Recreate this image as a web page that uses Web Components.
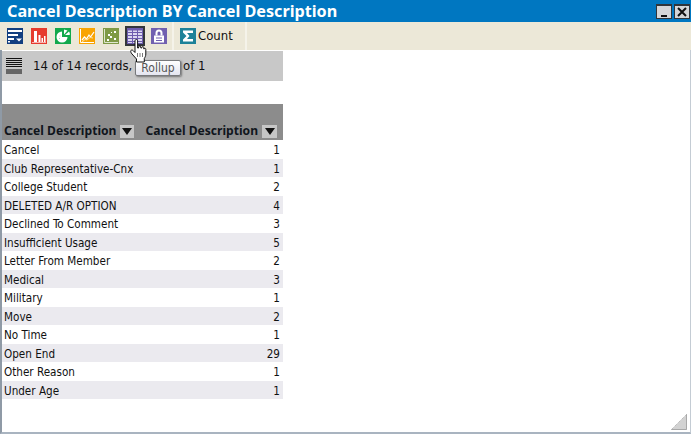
<!DOCTYPE html>
<html><head><meta charset="utf-8"><style>
html,body{margin:0;padding:0;background:#fff}
body{width:691px;height:434px;overflow:hidden;font-family:"DejaVu Sans Condensed","Noto Sans",sans-serif}
</style></head><body>
<report-window>
<tool-bar></tool-bar>
<status-bar></status-bar>
<data-table></data-table>
</report-window>
<script>
const F='"DejaVu Sans Condensed","Noto Sans",sans-serif', B='"Noto Sans",sans-serif';
const def=(n,html,init)=>customElements.define(n,class extends HTMLElement{constructor(){super();this.attachShadow({mode:'open'}).innerHTML=html}connectedCallback(){init&&init(this.shadowRoot,this)}});
def('report-window',`<style>
:host{display:flex;flex-direction:column;width:691px;height:434px;box-sizing:border-box;position:relative;background:#fff;border-left:2px solid #8f9aa6;border-bottom:2px solid #a9b4c0;border-right:1px solid #c4ccd4}
.title{margin-left:-2px;margin-right:-1px;height:22px;background:#0077c1;display:flex;align-items:center;justify-content:space-between;padding:0 1px 0 7px;flex:none}
h1{margin:0;font:bold 16.2px/22px ${B};color:#fff;white-space:nowrap}
.btns{display:flex;gap:2px;margin-top:1px}
.b{width:16px;height:15px;box-sizing:border-box;border:1px solid #30353a;border-top:2px solid #30353a;background:#d4d6d8;display:block}
.grip{position:absolute;right:3px;bottom:2px}
</style><div class="title"><h1>Cancel Description BY Cancel Description</h1><div class="btns">
<svg class="b" viewBox="0 0 14 12"><rect x="4" y="9" width="6" height="2" fill="#111"/></svg>
<svg class="b" viewBox="0 0 14 12"><path d="M3 2L11 10M11 2L3 10" stroke="#111" stroke-width="2"/></svg>
</div></div><slot></slot>
<svg class="grip" width="16" height="16" viewBox="0 0 16 16"><path d="M16 0V16H0Z" fill="#d2d2d2"/><path d="M15.5 0.5V15.5H0.5" fill="none" stroke="#a8a8a8"/><path d="M16 0L0 16" stroke="#aaa" stroke-dasharray="1 1"/></svg>`);

const ic=(bg,inner,cls='')=>`<svg class="${cls}" width="16" height="16" viewBox="0 0 16 16" style="background:${bg};display:block">${inner}</svg>`;
def('tool-bar',`<style>
:host{display:flex;align-items:center;height:28px;background:#ece8d8;margin-left:-2px;margin-right:-1px;flex:none;box-sizing:border-box;padding:0 0 0 7px;position:relative}
.g{display:flex;align-items:center;gap:8px}
.sel{outline:2px solid #33363a}
.sep{width:2px;height:28px;background:#f5f3ea;margin:0 6px 0 5px}
.lbl{font:13px/16px ${F};color:#111;margin-left:2px;width:35px}
.c{display:flex;align-items:center}
.hand{position:absolute;left:130px;top:17px;z-index:3}
</style><div class="g" id="g"></div><div class="sep"></div><div class="c" id="c"></div><div class="sep" style="margin-left:12px"></div>
<svg class="hand" width="18" height="24" viewBox="0 0 18 24"><path d="M5 2c0-2 2.600-2 2.600 0V9h1V8c0-1.400 2.200-1.400 2.200 0v1h1V8.600c0-1.300 2-1.300 2 0V10h.4c0-1 1.600-1 1.600.3V15c0 2-.7 3-1.500 4.500V23H6.500v-3L2 15C0 12.500.6 11 2 11c1 0 2 1.500 3 2.500Z" fill="#fff" stroke="#111" stroke-width="1"/><path d="M7.500 14v4M10 14v4M12.500 14v4" stroke="#555" stroke-width=".8"/></svg>`,
(r)=>{
r.getElementById('g').innerHTML=[
ic('#123f80','<path d="M1 2h14v2H1zM1 6h10v2H1zM1 10h6v2H1zM1 13h2v1.500H1z" fill="#fff"/><path d="M9 10.500h6l-3 3z" fill="#fff"/>'),
ic('#e63c2e','<path d="M3 3h3v11H3zM7.500 7h2v7h-2zM10.500 10h1.500v4h-1.500zM13 8h1.500v6H13z" fill="#fff"/><rect x="1" y="14" width="14" height="1" fill="#f7b5ae"/>'),
ic('#12a94c','<path d="M7 3.500A5.500 5.500 0 1 0 12.500 9H7Z" fill="#fff"/><path d="M9 1.500l3.500 1L9 6.500Z" fill="#fff"/><path d="M10 7l4-3.500c.9 1.200 1 2.500 .6 3.500Z" fill="#fff"/><path d="M4.500 8h1M4 10.500h1" stroke="#a6dcb8"/>'),
ic('#f9a400','<path d="M1.500 1v13.500H15" fill="none" stroke="#fff"/><path d="M3 12l2.500-3 2 2 2.500-4 1.500 2L15 4" fill="none" stroke="#fff" stroke-width="1.200"/><path d="M3 14l3-2.500 2 .5 3-2.500 3 .5" fill="none" stroke="#fde0a0"/>'),
ic('#7f9a45','<path d="M1.500 1v13.500H15" fill="none" stroke="#dfe7cf"/><path d="M4 11h2v2H4zM7 8h2v2H7zM11 3h2v2h-2zM11 10h2v2h-2zM5 6h2v2H5zM8 4h1v1H8z" fill="#fff"/>'),
ic('#6d5cae','<path d="M1 1h14v14H1z" fill="#dcd8f0"/><path d="M1 4.500h14M1 7.500h14M1 10.500h14M1 13.500h14M5.500 1v14M10.500 1v14" stroke="#6d5cae"/><path d="M1 1h14v1.500H1z" fill="#6d5cae"/>','sel'),
ic('#7160b0','<path d="M4.500 7.500V5a3.500 3.500 0 0 1 7 0v2.500h-2V5a1.500 1.500 0 0 0-3 0v2.500z" fill="#fff"/><rect x="3" y="7.500" width="10" height="7" fill="#fff"/><path d="M5 10h6M5 12.500h6" stroke="#7160b0"/>')
].join('');
r.getElementById('c').innerHTML=ic('#1d8299','<path d="M3 2.500h10v2.500H7L9.500 8 7 11h6v2.500H3v-2l3.500-3.500L3 4.500z" fill="#fff"/>')+'<span class="lbl">Count</span>';
});

def('status-bar',`<style>
:host{display:flex;align-items:center;width:281px;height:30px;background:#c8c8c8;flex:none;box-sizing:border-box;padding-left:4px;position:relative;font:13px/16px ${F};color:#111;margin-top:1px}
.t{margin-left:11px;white-space:nowrap;width:150px}
.tip{position:absolute;left:133px;top:9px;width:46px;height:16px;box-sizing:border-box;border:1px solid #77797c;border-radius:2px;background:linear-gradient(#fff,#e4e5f0);font:12px/14px ${F};color:#555;text-align:center;box-shadow:1px 1px 2px #777;z-index:2}
</style><svg width="16" height="16" viewBox="0 0 16 16"><path d="M0 .5h16M0 2.500h16M0 4.500h16M0 6.500h16M0 8.500h16" stroke="#111"/><rect y="11" width="16" height="5" fill="#666"/></svg>
<span class="t">14 of 14 records,</span><span>of 1</span><div class="tip">Rollup</div>`);

def('data-table',`<style>
:host{display:block;width:281px;margin-top:23px;font:11.600px/18px ${F};color:#111}
.h{height:36px;background:#8c8c8c;display:grid;grid-template-columns:134px 1fr;align-items:end;font:700 12.100px/18px ${B};color:#10151c;box-sizing:border-box;padding:0 0 0 2px}
.h div{display:flex;align-items:center;justify-content:flex-end;gap:4px;white-space:nowrap}
.h div:first-child{justify-content:flex-start}
.h i{width:15px;height:13px;background:#c6c6c6;display:flex;align-items:center;justify-content:center;margin-right:4px}
.h i::after{content:"";border:5px solid transparent;border-top:7px solid #111;border-bottom:0}
.r{display:flex;justify-content:space-between;padding:1px 3px 0 2px;height:19px;line-height:18px;box-sizing:border-box}
.r:nth-child(even){background:#ebeaef;height:18px;line-height:18px}
</style><div class="h"><div>Cancel Description <i></i></div><div>Cancel Description <i style="margin-right:6px"></i></div></div><div id="b"></div>`,
(r)=>{r.getElementById('b').innerHTML=[['Cancel',1],['Club Representative-Cnx',1],['College Student',2],['DELETED A/R OPTION',4],['Declined To Comment',3],['Insufficient Usage',5],['Letter From Member',2],['Medical',3],['Military',1],['Move',2],['No Time',1],['Open End',29],['Other Reason',1],['Under Age',1]].map(x=>`<div class="r"><span>${x[0]}</span><span>${x[1]}</span></div>`).join('')});
</script></body></html>
